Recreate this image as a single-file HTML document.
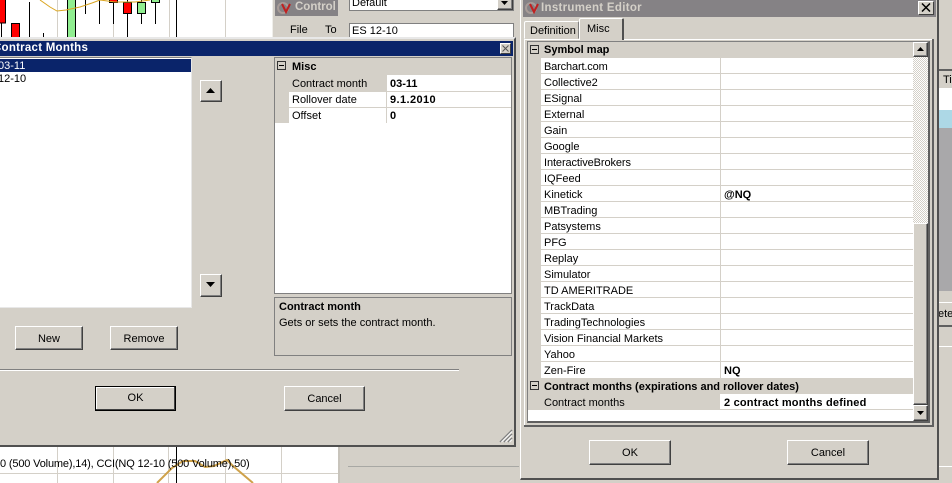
<!DOCTYPE html>
<html><head><meta charset="utf-8"><style>
html,body{margin:0;padding:0;background:#d4d0c8}
#p{position:relative;width:952px;height:483px;overflow:hidden;background:#d4d0c8;font:11px/14px "Liberation Sans",sans-serif;color:#000}
#p div{position:absolute;box-sizing:border-box}
.t{white-space:nowrap;height:14px}
.b{font-weight:bold}
.w{background:#fff}
.btn{background:#d4d0c8;border:1px solid;border-color:#fff #404040 #404040 #fff;box-shadow:inset -1px -1px 0 #808080;text-align:center;line-height:21px}
.tt{color:#d4d0c8;font-weight:bold;font-size:11.5px;white-space:nowrap;height:14px;letter-spacing:.3px}
.h{height:1px;background:#d4d0c8}
svg{position:absolute;left:0;top:0}
</style></head><body><div id="p">
<svg width="952" height="483" style="z-index:0">
<rect x="0" y="0" width="272" height="38" fill="#fff"/>
<g stroke="#d4d0c8" stroke-width="1"><path d="M57.5 0V38M113.5 0V38M169.5 0V38M225.5 0V38"/></g>
<g stroke="#000" stroke-width="1"><path d="M1.5 0V37M15.5 23V37M29.5 2V37M43.5 33V37M71.5 0V37M85.5 0V14M99.5 0V24M113.5 0V24M127.5 0V37M141.5 0V24M155.5 0V24M176.5 0V37"/></g>
<rect x="-2" y="-2" width="7.5" height="25" fill="#f00" stroke="#000"/>
<rect x="11.5" y="23.5" width="8" height="15" fill="#f00" stroke="#000"/>
<rect x="67.5" y="-2" width="8" height="41" fill="#90ee90" stroke="#000"/>
<rect x="109.5" y="-3" width="8" height="5.5" fill="#f00" stroke="#000"/>
<rect x="123.5" y="2.5" width="8" height="11" fill="#f00" stroke="#000"/>
<rect x="137.5" y="2.5" width="8" height="11" fill="#90ee90" stroke="#000"/>
<rect x="151.5" y="-3" width="8" height="5.5" fill="#90ee90" stroke="#000"/>
<path d="M40 0L50 7L57 11L66 10L80 7L92 3L100 0L115 2L135 2L150 0" fill="none" stroke="#daa520" stroke-width="1"/>
<rect x="0" y="446" width="338" height="37" fill="#fff"/>
<g stroke="#d4d0c8"><path d="M57.5 446V483M113.5 446V483M168.5 446V483M225.5 446V483M281.5 446V483M0 473.5H338"/></g>
<rect x="338" y="446" width="2" height="37" fill="#c8c4bc"/>
<path d="M176.5 446V483" stroke="#000"/>
<path d="M157 483L172 468L183 461L195 461L205 467L214 466L227 460L233 466L253 483" fill="none" stroke="#cfa24a" stroke-width="2"/>
<rect x="348" y="466" width="171" height="1" fill="#a8a8a4"/>
<rect x="272" y="0" width="1" height="38" fill="#efeeea"/>
</svg>
<div class="t" style="left:0;top:457px;z-index:1;letter-spacing:-.16px">0 (500 Volume),14), CCI(NQ 12-10 (500 Volume),50)</div>

<!-- Control window -->
<div style="left:275px;top:0;width:63px;height:16px;background:#858285"></div>
<svg width="16" height="14" style="left:277px;top:1px"><circle cx="6" cy="7" r="5" fill="none" stroke="#a89c98" stroke-width="2"/><path d="M5 3L9 11L13 3" fill="none" stroke="#c02020" stroke-width="2"/></svg>
<div class="tt" style="left:295px;top:0;letter-spacing:0">Control</div>
<div class="t" style="left:290px;top:23px">File</div>
<div class="t" style="left:325px;top:23px">To</div>
<div class="w" style="left:349px;top:-6px;width:165px;height:17px;border:1px solid #808080"></div>
<div class="t" style="left:352px;top:-4px">Default</div>
<div class="btn" style="left:497px;top:-6px;width:16px;height:16px"></div>
<svg width="8" height="5" style="left:501px;top:1px"><path d="M0 0H7L3.500 4Z" fill="#000"/></svg>
<div class="w" style="left:349px;top:23px;width:165px;height:16px;border:1px solid #808080;border-bottom:0"></div>
<div class="t" style="left:352px;top:24px">ES 12-10</div>

<!-- Contract Months window -->
<div style="left:-4px;top:37px;width:520px;height:410px;background:#d4d0c8;border:1px solid #c8c8c8;border-top:2px solid #e8e8e8;border-right:2px solid #505050;border-bottom:2px solid #505050"></div>
<div style="left:0;top:41px;width:513px;height:15px;background:#0a246a"></div>
<div class="tt" style="left:-7px;top:41px;color:#fff;letter-spacing:.25px">Contract Months</div>
<div style="left:500px;top:43px;width:11px;height:11px;background:#d4d0c8;border:1px solid;border-color:#fff #404040 #404040 #fff"></div>
<svg width="7" height="7" style="left:502px;top:45px"><path d="M.5 .5L6.500 6.500M6.500 .5L.5 6.500" stroke="#555"/></svg>

<div class="w" style="left:-3px;top:57px;width:195px;height:251px;border:1px solid #808080;border-right:1px solid #e8e8e8;border-bottom:1px solid #e8e8e8"></div>
<div style="left:0;top:59px;width:191px;height:13px;background:#0a246a"></div>
<div class="t" style="left:-2px;top:59px;color:#fff">03-11</div>
<div class="t" style="left:-2px;top:72px">12-10</div>
<div class="btn" style="left:200px;top:80px;width:22px;height:22px"></div>
<svg width="10" height="6" style="left:206px;top:88px"><path d="M0 5H9L4.500 0Z" fill="#000"/></svg>
<div class="btn" style="left:200px;top:274px;width:22px;height:23px"></div>
<svg width="10" height="6" style="left:206px;top:282px"><path d="M0 0H9L4.500 5Z" fill="#000"/></svg>

<div class="w" style="left:274px;top:57px;width:238px;height:237px;border:1px solid #808080"></div>
<div style="left:275px;top:58px;width:236px;height:17px;background:#d4d0c8"></div>
<div style="left:275px;top:75px;width:14px;height:48px;background:#d4d0c8"></div>
<div style="left:289px;top:75px;width:97px;height:16px;background:#d4d0c8"></div>
<div class="h" style="left:289px;top:91px;width:222px"></div>
<div class="h" style="left:289px;top:107px;width:222px"></div>
<div style="left:386px;top:75px;width:1px;height:48px;background:#d4d0c8"></div>
<div style="left:277px;top:61px;width:9px;height:9px;border:1px solid #333"></div>
<div style="left:279px;top:65px;width:5px;height:1px;background:#000"></div>
<div class="t b" style="left:292px;top:60px">Misc</div>
<div class="t" style="left:292px;top:77px">Contract month</div>
<div class="t" style="left:292px;top:93px">Rollover date</div>
<div class="t" style="left:292px;top:109px">Offset</div>
<div class="t b" style="left:390px;top:77px">03-11</div>
<div class="t b" style="left:390px;top:93px;letter-spacing:.4px">9.1.2010</div>
<div class="t b" style="left:390px;top:109px">0</div>

<div style="left:274px;top:297px;width:238px;height:59px;border:1px solid #808080"></div>
<div class="t b" style="left:279px;top:300px">Contract month</div>
<div class="t" style="left:279px;top:316px">Gets or sets the contract month.</div>

<div class="btn" style="left:15px;top:326px;width:68px;height:24px;line-height:25px">New</div>
<div class="btn" style="left:110px;top:326px;width:68px;height:24px;line-height:25px">Remove</div>
<div style="left:0;top:369px;width:459px;height:1px;background:#808080"></div>
<div style="left:0;top:370px;width:459px;height:1px;background:#fff"></div>
<div class="btn" style="left:95px;top:386px;width:81px;height:25px;border:1px solid #000;box-shadow:inset -1px -1px 0 #404040,inset 1px 1px 0 #fff;line-height:22px">OK</div>
<div class="btn" style="left:284px;top:386px;width:81px;height:25px;line-height:24px">Cancel</div>
<svg width="14" height="14" style="left:499px;top:429px"><path d="M1 13L13 1M5 13L13 5M9 13L13 9" stroke="#808080" stroke-width="1.500"/><path d="M2.500 13L13 2.500M6.500 13L13 6.500M10.500 13L13 10.500" stroke="#fff" stroke-width="1"/></svg>

<!-- Right strip -->
<div style="left:938px;top:0;width:14px;height:483px;background:#d4d0c8"></div>
<div style="left:938px;top:69px;width:14px;height:2px;background:#606060"></div>
<div class="t" style="left:943px;top:73px">Ti</div>
<div class="w" style="left:938px;top:88px;width:14px;height:22px"></div>
<div style="left:938px;top:110px;width:14px;height:18px;background:#add8e6"></div>
<div style="left:938px;top:128px;width:14px;height:163px;background:#a9a8aa"></div>
<div style="left:938px;top:302px;width:14px;height:1px;background:#fff"></div>
<div class="w" style="left:938px;top:303px;width:14px;height:22px;background:#d4d0c8"></div>
<div class="t" style="left:938px;top:307px">ete</div>
<div style="left:938px;top:325px;width:14px;height:2px;background:#606060"></div>
<div style="left:938px;top:346px;width:14px;height:1px;background:#fff"></div>
<div style="left:938px;top:466px;width:14px;height:1px;background:#fff"></div>

<!-- Instrument Editor -->
<div style="left:520px;top:-3px;width:419px;height:483px;background:#d4d0c8;border-left:1px solid #fff;border-right:2px solid #505050;border-bottom:2px solid #505050"></div>
<div style="left:523px;top:0;width:413px;height:17px;background:#858285"></div>
<svg width="16" height="14" style="left:525px;top:1px"><circle cx="6" cy="7" r="5" fill="none" stroke="#a89c98" stroke-width="2"/><path d="M5 3L9 11L13 3" fill="none" stroke="#c02020" stroke-width="2"/></svg>
<div class="tt" style="left:541px;top:1px">Instrument Editor</div>
<div style="left:918px;top:1px;width:16px;height:14px;background:#d4d0c8;border:1px solid;border-color:#fff #404040 #404040 #fff"></div>
<svg width="10" height="9" style="left:921px;top:3px"><path d="M1 .5L9 8.500M9 .5L1 8.500" stroke="#000" stroke-width="1.500"/></svg>

<div style="left:524px;top:39px;width:408px;height:1px;background:#fff"></div>
<div style="left:524px;top:39px;width:1px;height:386px;background:#fff"></div>
<div style="left:932px;top:39px;width:2px;height:388px;background:#606060"></div>
<div style="left:524px;top:425px;width:410px;height:2px;background:#606060"></div>
<div style="left:527px;top:41px;width:403px;height:382px;background:#fff;border:1px solid #808080;border-right:2px solid #606060;border-bottom:2px solid #606060"></div>
<div style="left:524px;top:21px;width:55px;height:18px;background:#d4d0c8;border:1px solid;border-color:#fff #808080 transparent #fff;border-radius:2px 2px 0 0"></div>
<div class="t" style="left:530px;top:24px">Definition</div>
<div style="left:579px;top:18px;width:45px;height:22px;background:#d4d0c8;border-top:1px solid #fff;border-left:1px solid #fff;border-right:2px solid #505050;border-radius:2px 2px 0 0"></div>
<div class="t" style="left:587px;top:22px">Misc</div>

<div style="left:528px;top:42px;width:385px;height:16px;background:#d4d0c8"></div>
<div style="left:528px;top:58px;width:13px;height:352px;background:#d4d0c8"></div>
<div style="left:528px;top:378px;width:385px;height:16px;background:#d4d0c8"></div>
<div style="left:541px;top:394px;width:179px;height:16px;background:#d4d0c8"></div>
<div style="left:720px;top:58px;width:1px;height:320px;background:#d4d0c8"></div>
<div class="h" style="left:541px;top:73px;width:372px"></div>
<div class="h" style="left:541px;top:89px;width:372px"></div>
<div class="h" style="left:541px;top:105px;width:372px"></div>
<div class="h" style="left:541px;top:121px;width:372px"></div>
<div class="h" style="left:541px;top:137px;width:372px"></div>
<div class="h" style="left:541px;top:153px;width:372px"></div>
<div class="h" style="left:541px;top:169px;width:372px"></div>
<div class="h" style="left:541px;top:185px;width:372px"></div>
<div class="h" style="left:541px;top:201px;width:372px"></div>
<div class="h" style="left:541px;top:217px;width:372px"></div>
<div class="h" style="left:541px;top:233px;width:372px"></div>
<div class="h" style="left:541px;top:249px;width:372px"></div>
<div class="h" style="left:541px;top:265px;width:372px"></div>
<div class="h" style="left:541px;top:281px;width:372px"></div>
<div class="h" style="left:541px;top:297px;width:372px"></div>
<div class="h" style="left:541px;top:313px;width:372px"></div>
<div class="h" style="left:541px;top:329px;width:372px"></div>
<div class="h" style="left:541px;top:345px;width:372px"></div>
<div class="h" style="left:541px;top:361px;width:372px"></div>
<div class="h" style="left:720px;top:409px;width:193px"></div>

<div style="left:530px;top:45px;width:9px;height:9px;border:1px solid #333"></div>
<div style="left:532px;top:49px;width:5px;height:1px;background:#000"></div>
<div style="left:530px;top:381px;width:9px;height:9px;border:1px solid #333"></div>
<div style="left:532px;top:385px;width:5px;height:1px;background:#000"></div>
<div class="t b" style="left:544px;top:43px">Symbol map</div>
<div class="t" style="left:544px;top:60px;letter-spacing:-.15px">Barchart.com</div>
<div class="t" style="left:544px;top:76px">Collective2</div>
<div class="t" style="left:544px;top:92px">ESignal</div>
<div class="t" style="left:544px;top:108px">External</div>
<div class="t" style="left:544px;top:124px">Gain</div>
<div class="t" style="left:544px;top:140px">Google</div>
<div class="t" style="left:544px;top:156px;letter-spacing:-.1px">InteractiveBrokers</div>
<div class="t" style="left:544px;top:172px">IQFeed</div>
<div class="t" style="left:544px;top:188px">Kinetick</div>
<div class="t" style="left:544px;top:204px">MBTrading</div>
<div class="t" style="left:544px;top:220px">Patsystems</div>
<div class="t" style="left:544px;top:236px">PFG</div>
<div class="t" style="left:544px;top:252px">Replay</div>
<div class="t" style="left:544px;top:268px">Simulator</div>
<div class="t" style="left:544px;top:284px">TD AMERITRADE</div>
<div class="t" style="left:544px;top:300px">TrackData</div>
<div class="t" style="left:544px;top:316px">TradingTechnologies</div>
<div class="t" style="left:544px;top:332px">Vision Financial Markets</div>
<div class="t" style="left:544px;top:348px">Yahoo</div>
<div class="t" style="left:544px;top:364px">Zen-Fire</div>
<div class="t b" style="left:544px;top:380px">Contract months (expirations and rollover dates)</div>
<div class="t" style="left:544px;top:396px">Contract months</div>
<div class="t b" style="left:724px;top:188px">@NQ</div>
<div class="t b" style="left:724px;top:364px">NQ</div>
<div class="t b" style="left:724px;top:396px;letter-spacing:.2px">2 contract months defined</div>

<!-- scrollbar -->
<div style="left:913px;top:42px;width:15px;height:379px;background:#d4d0c8"></div>
<svg width="15" height="166" style="left:913px;top:57px"><defs><pattern id="c" width="2" height="2" patternUnits="userSpaceOnUse"><rect width="2" height="2" fill="#fff"/><rect width="1" height="1" fill="#d4d0c8"/><rect x="1" y="1" width="1" height="1" fill="#d4d0c8"/></pattern></defs><rect width="15" height="166" fill="url(#c)"/></svg>
<div class="btn" style="left:913px;top:42px;width:15px;height:15px"></div>
<svg width="8" height="5" style="left:917px;top:47px"><path d="M0 4H7L3.500 0Z" fill="#000"/></svg>
<div class="btn" style="left:913px;top:223px;width:15px;height:182px"></div>
<div class="btn" style="left:913px;top:405px;width:15px;height:16px"></div>
<svg width="8" height="5" style="left:917px;top:411px"><path d="M0 0H7L3.500 4Z" fill="#000"/></svg>

<div class="btn" style="left:589px;top:440px;width:82px;height:25px;line-height:24px">OK</div>
<div class="btn" style="left:787px;top:440px;width:82px;height:25px;line-height:24px">Cancel</div>
</div></body></html>
